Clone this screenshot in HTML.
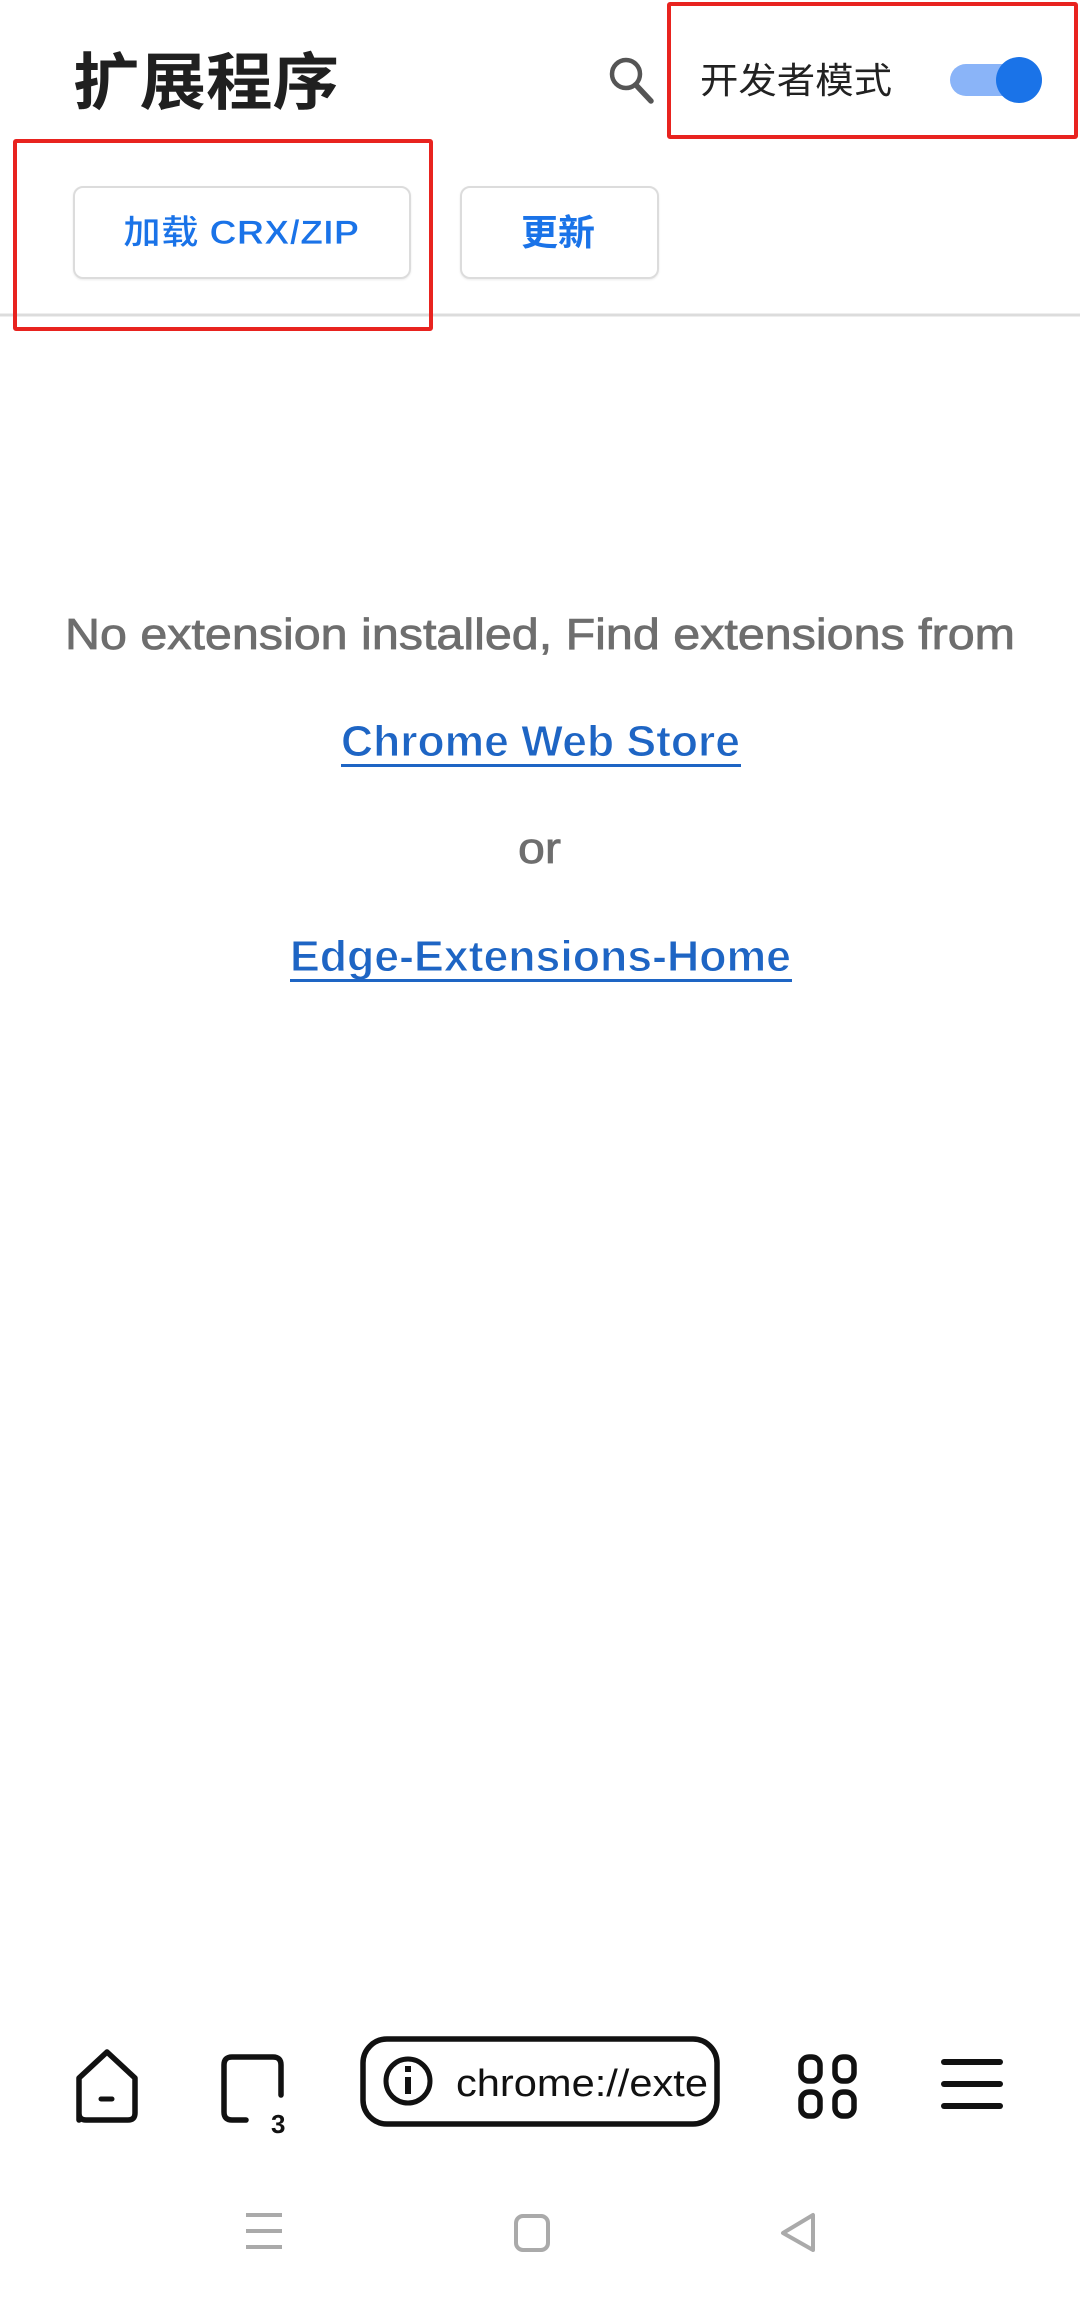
<!DOCTYPE html>
<html><head><meta charset="utf-8"><style>
html,body{margin:0;padding:0;background:#fff;}
body{width:1080px;height:2299px;position:relative;overflow:hidden;font-family:"Liberation Sans","Noto Sans CJK SC",sans-serif;}
.a{position:absolute;}
.red{position:absolute;border:4px solid #e8231f;box-sizing:border-box;border-radius:3px;}
.btn{position:absolute;border:2px solid #dcdcdc;border-radius:10px;box-sizing:border-box;box-shadow:0 1px 2px rgba(0,0,0,0.08);}
</style></head><body>
<svg class="a" style="left:0;top:0" width="1080" height="2299" viewBox="0 0 1080 2299">
  <text x="73" y="104" font-family="Noto Sans CJK SC, sans-serif" font-weight="700" font-size="62" fill="#202020" textLength="266" lengthAdjust="spacingAndGlyphs">扩展程序</text>
  <circle cx="626" cy="74" r="14" fill="none" stroke="#555" stroke-width="4.5"/>
  <line x1="636" y1="85" x2="651" y2="101" stroke="#555" stroke-width="5.5" stroke-linecap="round"/>
  <text x="700" y="93" font-family="Noto Sans CJK SC, sans-serif" font-size="36" fill="#222" textLength="192" lengthAdjust="spacingAndGlyphs">开发者模式</text>
  <rect x="950" y="64" width="80" height="32" rx="16" fill="#8ab4f8"/>
  <circle cx="1019" cy="80" r="23" fill="#1a73e8"/>
  <text x="123" y="244" font-family="Liberation Sans, Noto Sans CJK SC, sans-serif" font-size="34" font-weight="700" fill="#1a73e8" stroke="#fff" stroke-width="0.8" textLength="236" lengthAdjust="spacingAndGlyphs">加载 CRX/ZIP</text>
  <text x="521" y="245" font-family="Noto Sans CJK SC, sans-serif" font-size="36" font-weight="700" fill="#1a73e8" textLength="74" lengthAdjust="spacingAndGlyphs">更新</text>
  <line x1="0" y1="315" x2="1080" y2="315" stroke="#dcdcdc" stroke-width="3"/>
  <text x="65" y="649" font-size="44" fill="#6e6e6e" stroke="#6e6e6e" stroke-width="0.8" font-family="Liberation Sans, sans-serif" textLength="950" lengthAdjust="spacingAndGlyphs">No extension installed, Find extensions from</text>
  <text x="341" y="756" font-size="44" font-weight="700" fill="#1e65c4" stroke="#fff" stroke-width="1" font-family="Liberation Sans, sans-serif" textLength="399" lengthAdjust="spacingAndGlyphs">Chrome Web Store</text>
  <rect x="341" y="764" width="400" height="3" fill="#1e65c4"/>
  <text x="518" y="863" font-size="44" fill="#6e6e6e" stroke="#6e6e6e" stroke-width="0.8" font-family="Liberation Sans, sans-serif" textLength="43" lengthAdjust="spacingAndGlyphs">or</text>
  <text x="290" y="971" font-size="44" font-weight="700" fill="#1e65c4" stroke="#fff" stroke-width="1" font-family="Liberation Sans, sans-serif" textLength="501" lengthAdjust="spacingAndGlyphs">Edge-Extensions-Home</text>
  <rect x="290" y="979" width="502" height="3" fill="#1e65c4"/>
  <path d="M79 2120 V2078 L107 2052 L135 2078 V2113 Q135 2120 128 2120 H86 Q79 2120 79 2113 Z" fill="none" stroke="#111" stroke-width="5.5" stroke-linejoin="round"/>
  <line x1="101" y1="2099" x2="112" y2="2099" stroke="#111" stroke-width="5" stroke-linecap="round"/>
  <path d="M246 2120 H232 Q224 2120 224 2112 V2065 Q224 2057 232 2057 H273 Q281 2057 281 2065 V2095" fill="none" stroke="#111" stroke-width="5.5" stroke-linecap="round"/>
  <text x="271" y="2133" font-size="26" font-weight="700" fill="#111" font-family="Liberation Sans, sans-serif">3</text>
  <rect x="363" y="2039" width="354" height="85" rx="24" fill="none" stroke="#111" stroke-width="5.5"/>
  <circle cx="408" cy="2081" r="22" fill="none" stroke="#111" stroke-width="5"/>
  <rect x="405" y="2077" width="6" height="17" fill="#111"/>
  <rect x="405" y="2066" width="6" height="6" fill="#111"/>
  <text x="456" y="2096" font-size="38" fill="#111" font-family="Liberation Sans, sans-serif" textLength="252" lengthAdjust="spacingAndGlyphs">chrome://exte</text>
  <g fill="none" stroke="#111" stroke-width="5.5">
    <rect x="801" y="2057" width="19" height="24" rx="8"/>
    <rect x="835" y="2057" width="19" height="24" rx="8"/>
    <rect x="801" y="2092" width="19" height="24" rx="8"/>
    <rect x="835" y="2092" width="19" height="24" rx="8"/>
  </g>
  <g stroke="#111" stroke-width="6" stroke-linecap="round">
    <line x1="944" y1="2062" x2="1000" y2="2062"/>
    <line x1="944" y1="2084" x2="1000" y2="2084"/>
    <line x1="944" y1="2106" x2="1000" y2="2106"/>
  </g>
  <g stroke="#aaa" stroke-width="4">
    <line x1="246" y1="2215" x2="282" y2="2215"/>
    <line x1="246" y1="2231" x2="282" y2="2231"/>
    <line x1="246" y1="2247" x2="282" y2="2247"/>
  </g>
  <rect x="516" y="2216" width="32" height="34" rx="7" fill="none" stroke="#aaa" stroke-width="4"/>
  <path d="M813 2215 V2250 L783 2233 Z" fill="none" stroke="#aaa" stroke-width="4" stroke-linejoin="round"/>
</svg>
<div class="btn" style="left:73px;top:186px;width:338px;height:93px;"></div>
<div class="btn" style="left:460px;top:186px;width:199px;height:93px;"></div>
<div class="red" style="left:667px;top:2px;width:411px;height:137px;"></div>
<div class="red" style="left:13px;top:139px;width:420px;height:192px;"></div>
</body></html>
